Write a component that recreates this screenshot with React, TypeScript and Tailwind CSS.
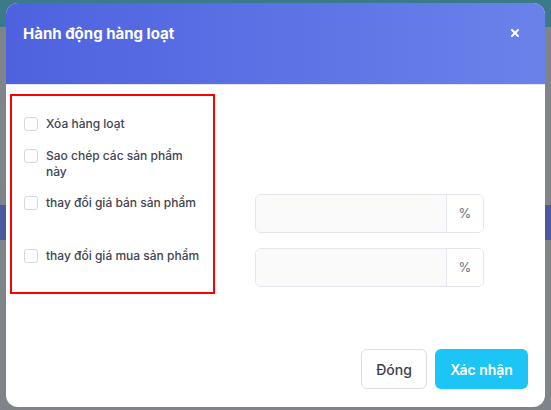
import { X } from 'lucide-react';

const font = { fontFamily: 'Inter, "Noto Sans", sans-serif' };

function Check({ label }: { label: string }) {
  return (
    <label className="flex items-start gap-[8px] text-[12px] leading-[16px] font-medium text-[#3f4452]">
      <span className="mt-[1px] w-[14px] h-[14px] shrink-0 rounded-[3px] border border-[#d4d8de] bg-white" />
      <span>{label}</span>
    </label>
  );
}

function PercentInput() {
  return (
    <div className="flex h-[39px] w-[229px] rounded-[6px] border border-[#e3e7ed] overflow-hidden">
      <div className="flex-1 bg-[#fafafb]" />
      <div className="w-[37px] border-l border-[#e3e7ed] bg-white flex items-center justify-center text-[13px] text-[#6b7280]">
        %
      </div>
    </div>
  );
}

export default function App() {
  return (
    <div className="relative w-[551px] h-[410px] overflow-hidden bg-[#7f838a]" style={font}>
      {/* page behind the overlay */}
      <div className="h-[27px] bg-[#3b7a8b]" />
      <div className="h-[178px]" />
      <div className="h-[35px] bg-[#4a5a9c]" />

      {/* modal */}
      <div className="absolute left-[6px] top-[3px] w-[539px] rounded-[12px] bg-white overflow-hidden">
        <div className="h-[81px] bg-gradient-to-r from-[#4e62df] to-[#6b81ea] flex items-start justify-between pl-[17px] pr-[24px] pt-[20px]">
          <h2 className="text-[15px] leading-[22px] font-bold text-white">Hành động hàng loạt</h2>
          <X className="w-[12px] h-[12px] text-white mt-[4px]" strokeWidth={4} />
        </div>
        <div className="h-px bg-[#e5e7eb]" />

        <div className="flex pl-[4px] pt-[9px]">
          <div className="w-[205px] h-[200px] border-2 border-[#ff0000] pl-[12px] pr-[13px] pt-[20px]">
            <Check label="Xóa hàng loạt" />
            <div className="mt-[16px]">
              <Check label="Sao chép các sản phẩm này" />
            </div>
            <div className="mt-[15px]">
              <Check label="thay đổi giá bán sản phẩm" />
            </div>
            <div className="mt-[37px]">
              <Check label="thay đổi giá mua sản phẩm" />
            </div>
          </div>
          <div className="ml-[40px] pt-[100px] flex flex-col gap-[15px]">
            <PercentInput />
            <PercentInput />
          </div>
        </div>

        <div className="flex justify-end gap-[8px] pt-[55px] pr-[17px] pb-[18px]">
          <button className="h-[40px] w-[66px] rounded-[6px] border border-[#dcdfe4] bg-white text-[14px] font-medium text-[#3a3f4b]">
            Đóng
          </button>
          <button className="h-[40px] w-[93px] rounded-[6px] bg-[#1cc5f6] text-[14px] font-semibold text-white">
            Xác nhận
          </button>
        </div>
      </div>
    </div>
  );
}
